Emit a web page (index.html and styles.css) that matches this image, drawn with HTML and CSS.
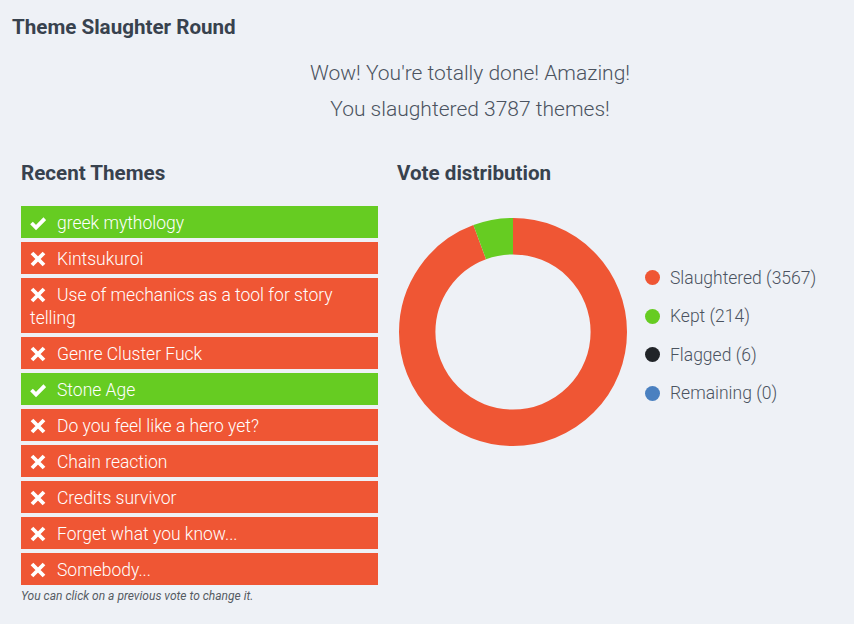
FILE: index.html
```html
<!DOCTYPE html>
<html lang="en">
<head>
  <meta charset="UTF-8" />
  <meta name="viewport" content="width=device-width, initial-scale=1.0"/>
  <title>Theme Slaughter Round</title>
  <link rel="stylesheet" href="styles.css">
</head>
<body>

  <h1 class="titulo">Theme Slaughter Round</h1>

  <div class="mensagem">
    <p>Wow! You're totally done! Amazing!</p>
    <p>You slaughtered 3787 themes!</p>
  </div>

  <div class="colunas">

    <div class="recentes">
      <h2>Recent Themes</h2>
      <ul class="lista">
        <li class="kept"><svg class="icone" viewBox="0 0 16 16"><polyline points="1.5,8 6,12.5 14.8,3.7"/></svg>greek mythology</li>
        <li class="slaughtered"><svg class="icone" viewBox="0 0 16 16"><path d="M2 2 L14 14 M14 2 L2 14"/></svg>Kintsukuroi</li>
        <li class="slaughtered"><svg class="icone" viewBox="0 0 16 16"><path d="M2 2 L14 14 M14 2 L2 14"/></svg>Use of mechanics as a tool for story telling</li>
        <li class="slaughtered"><svg class="icone" viewBox="0 0 16 16"><path d="M2 2 L14 14 M14 2 L2 14"/></svg>Genre Cluster Fuck</li>
        <li class="kept"><svg class="icone" viewBox="0 0 16 16"><polyline points="1.5,8 6,12.5 14.8,3.7"/></svg>Stone Age</li>
        <li class="slaughtered"><svg class="icone" viewBox="0 0 16 16"><path d="M2 2 L14 14 M14 2 L2 14"/></svg>Do you feel like a hero yet?</li>
        <li class="slaughtered"><svg class="icone" viewBox="0 0 16 16"><path d="M2 2 L14 14 M14 2 L2 14"/></svg>Chain reaction</li>
        <li class="slaughtered"><svg class="icone" viewBox="0 0 16 16"><path d="M2 2 L14 14 M14 2 L2 14"/></svg>Credits survivor</li>
        <li class="slaughtered"><svg class="icone" viewBox="0 0 16 16"><path d="M2 2 L14 14 M14 2 L2 14"/></svg>Forget what you know...</li>
        <li class="slaughtered"><svg class="icone" viewBox="0 0 16 16"><path d="M2 2 L14 14 M14 2 L2 14"/></svg>Somebody...</li>
      </ul>
      <p class="dica">You can click on a previous vote to change it.</p>
    </div>

    <div class="distribuicao">
      <h2>Vote distribution</h2>
      <div class="grafico">
        <!-- 3567 / 214 / 6 / 0 de 3787, circunferência 601.93 -->
        <svg class="rosca" width="228" height="228" viewBox="0 0 228 228">
          <g transform="rotate(-90 114 114)" fill="none" stroke-width="36.4">
            <circle cx="114" cy="114" r="95.8" stroke="#ef5634" stroke-dasharray="566.96 601.93"/>
            <circle cx="114" cy="114" r="95.8" stroke="#66cc22" stroke-dasharray="34.01 601.93" stroke-dashoffset="-566.96"/>
            <circle cx="114" cy="114" r="95.8" stroke="#3a3c40" stroke-dasharray="0.96 601.93" stroke-dashoffset="-600.97"/>
          </g>
        </svg>
        <ul class="legenda">
          <li><span class="ponto vermelho"></span>Slaughtered (3567)</li>
          <li><span class="ponto verde"></span>Kept (214)</li>
          <li><span class="ponto preto"></span>Flagged (6)</li>
          <li><span class="ponto azul"></span>Remaining (0)</li>
        </ul>
      </div>
    </div>

  </div>

</body>
</html>
```

FILE: styles.css
```css
body {
  margin: 0;
  background-color: #eef1f6;
  font-family: Roboto, "Liberation Sans", sans-serif;
  color: #4b5360;
}

.titulo {
  margin: 0;
  padding: 13px 0 0 12px;
  font-size: 20.6px;
  line-height: 28px;
  font-weight: 700;
  color: #38424e;
}

.mensagem {
  margin-top: 14px;
  padding-left: 86px;
  text-align: center;
}

.mensagem p {
  margin: 0;
  font-size: 21px;
  line-height: 36px;
  font-weight: 300;
}

.colunas {
  display: grid;
  grid-template-columns: 357px 1fr;
  column-gap: 19px;
  padding-left: 21px;
  margin-top: 32px;
}

h2 {
  margin: 0 0 19px 0;
  font-size: 20.6px;
  line-height: 28px;
  font-weight: 700;
  color: #38424e;
}

.lista {
  list-style: none;
  margin: 0;
  padding: 0;
}

.lista li {
  padding: 6px 9px 3px 9px;
  margin-bottom: 4px;
  font-size: 17.5px;
  line-height: 23px;
  font-weight: 300;
  color: white;
  cursor: pointer;
}

.lista li:last-child {
  margin-bottom: 0;
}

.kept {
  background-color: #66cc22;
}

.slaughtered {
  background-color: #ef5634;
}

.icone {
  display: inline-block;
  width: 16px;
  height: 16px;
  margin-right: 11px;
  vertical-align: -2px;
  fill: none;
  stroke: white;
  stroke-width: 3.8;
}

.dica {
  margin: 4px 0 0 0;
  font-size: 12px;
  font-style: italic;
  color: #555b63;
}

.grafico {
  display: flex;
  align-items: center;
  margin-top: 31px;
}

.rosca {
  margin-left: 2px;
  flex-shrink: 0;
}

.legenda {
  list-style: none;
  margin: 0 0 0 18px;
  padding: 7px 0 0 0;
}

.legenda li {
  display: flex;
  align-items: center;
  font-size: 17.5px;
  line-height: 38.5px;
  font-weight: 300;
}

.ponto {
  width: 15px;
  height: 15px;
  border-radius: 50%;
  margin-right: 10px;
}

.vermelho { background-color: #ef5634; }
.verde { background-color: #66cc22; }
.preto { background-color: #212428; }
.azul { background-color: #4a80c0; }
```
